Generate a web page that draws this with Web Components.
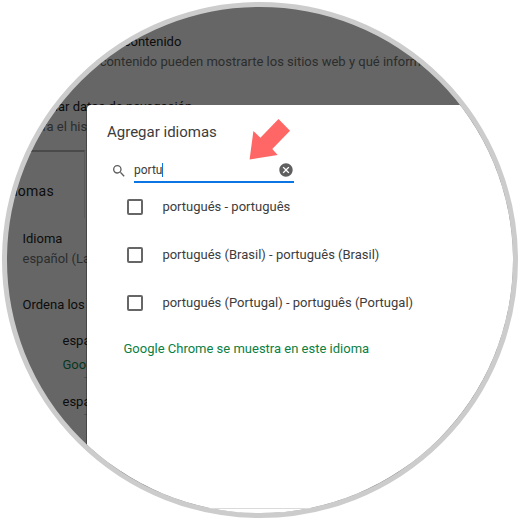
<!DOCTYPE html>
<html lang="es">
<head>
<meta charset="utf-8">
<title>Agregar idiomas</title>
<style>
  body {
    margin: 0;
    padding: 2px;
    background: #fff;
    font-family: Roboto, "Liberation Sans", sans-serif;
    font-size: 13px;
    line-height: 20px;
    color: #3c3c3c;
  }
</style>
</head>
<body>
<round-frame>
  <settings-page slot="page">
    <settings-row title-text="Configuración de contenido" detail="Controla qué contenido pueden mostrarte los sitios web y qué información" style="padding-top: 25px"></settings-row>
    <settings-row title-text="Eliminar datos de navegación" detail="Borra el historial" style="padding-top: 25px"></settings-row>
    <settings-heading>Idiomas</settings-heading>
    <settings-row title-text="Idioma" detail="español (Lat" style="padding-top: 11px"></settings-row>
    <settings-row title-text="Ordena los" style="padding-top: 26px"></settings-row>
    <settings-row title-text="espa" detail="Goo" green divider style="padding: 16px 0 0 40px"></settings-row>
    <settings-row title-text="espa" divider style="padding: 14px 0 0 40px"></settings-row>
  </settings-page>
  <language-dialog slot="dialog" heading="Agregar idiomas">
    <search-field slot="search" value="portu"></search-field>
    <language-option>portugués - português</language-option>
    <language-option>portugués (Brasil) - português (Brasil)</language-option>
    <language-option>portugués (Portugal) - português (Portugal)</language-option>
    <span slot="note">Google Chrome se muestra en este idioma</span>
  </language-dialog>
  <pointer-arrow slot="pointer"></pointer-arrow>
</round-frame>

<script>
class BaseElement extends HTMLElement {
  constructor() {
    super();
    this.attachShadow({ mode: "open" });
  }

  connectedCallback() {
    this.shadowRoot.innerHTML = this.render();
  }
}

class RoundFrame extends BaseElement {
  render() {
    return `
      <style>
        :host {
          display: block;
          position: relative;
          box-sizing: border-box;
          width: 516px;
          height: 516px;
          border: 5px solid #ccc;
          border-radius: 50%;
          overflow: hidden;
          background: #666;
        }
        /* the dialog and the arrow lie over the page */
        ::slotted([slot="dialog"]) {
          position: absolute;
          left: 80px;
          top: 98px;
        }
        ::slotted([slot="pointer"]) {
          position: absolute;
          left: 242px;
          top: 111px;
        }
      </style>
      <slot name="page"></slot>
      <slot name="dialog"></slot>
      <slot name="pointer"></slot>
    `;
  }
}

class SettingsPage extends BaseElement {
  render() {
    return `
      <style>
        :host {
          display: block;
          padding-left: 15.5px;
          white-space: nowrap;
        }
      </style>
      <slot></slot>
    `;
  }
}

class SettingsRow extends BaseElement {
  render() {
    const detail = this.getAttribute("detail");
    return `
      <style>
        :host { display: block; }
        .title { color: #0c0c0c; }
        .detail { color: #2b2d2d; }
        :host([green]) .detail {
          color: #06361f;
          padding-top: 4px;
        }
        :host([divider])::after {
          content: "";
          display: block;
          width: 4px;
          height: 1px;
          margin: 2px 0 0 21px;
          background: #525252;
        }
      </style>
      <div class="title">${this.getAttribute("title-text")}</div>
      ${detail ? `<div class="detail">${detail}</div>` : ""}
    `;
  }
}

class SettingsHeading extends BaseElement {
  render() {
    return `
      <style>
        :host {
          display: block;
          width: 77px;
          height: 66px;
          margin: 13px 0 0 -15.5px;
          border-top: 2px solid #4a4a4a;
          border-right: 1px solid #5a5a5a;
        }
        div {
          margin-left: -5px;
          padding-top: 29px;
          font-size: 14px;
          letter-spacing: .25px;
          color: #0c0c0c;
        }
      </style>
      <div><slot></slot></div>
    `;
  }
}

class LanguageDialog extends BaseElement {
  render() {
    return `
      <style>
        :host {
          display: block;
          width: 450px;
          height: 420px;
          border-radius: 4px 4px 0 0;
          background: #fff;
          box-shadow: -1px 0 0 rgba(0, 0, 0, .3);
        }
        .body {
          box-sizing: border-box;
          height: 404px;
          padding: 17px 20px 0;
          border-bottom: 1px solid #dadada;
        }
        h1 {
          margin: 0 0 17px;
          font-size: 15px;
          font-weight: 400;
          line-height: 20px;
        }
        .options { padding: 0 0 0 20px; }
        .note {
          padding: 12px 0 0 16.5px;
          color: #0b8043;
        }
      </style>
      <div class="body">
        <h1>${this.getAttribute("heading")}</h1>
        <slot name="search"></slot>
        <div class="options"><slot></slot></div>
        <div class="note"><slot name="note"></slot></div>
      </div>
    `;
  }
}

class SearchField extends BaseElement {
  render() {
    return `
      <style>
        :host {
          display: flex;
          align-items: flex-start;
          height: 24px;
          font-size: 12px;
        }
        .glass {
          width: 16px;
          height: 16px;
          margin: 4px 7px 0 4px;
        }
        .field {
          display: flex;
          align-items: center;
          box-sizing: border-box;
          width: 160px;
          height: 24px;
          border-bottom: 2px solid #0b75e4;
        }
        .caret {
          width: 1px;
          height: 14px;
          background: #0b75e4;
        }
        .clear {
          width: 16px;
          height: 16px;
          margin-left: auto;
        }
      </style>
      <svg class="glass" viewBox="0 0 24 24" fill="#5f5f5f">
        <path d="M15.5 14h-.79l-.28-.27A6.47 6.47 0 0 0 16 9.5 6.5 6.5 0 1 0 9.5 16c1.61 0 3.09-.59 4.23-1.57l.27.28v.79l5 4.99L20.49 19l-4.99-5zm-6 0a4.5 4.5 0 1 1 0-9 4.5 4.5 0 0 1 0 9z"/>
      </svg>
      <div class="field">
        <span>${this.getAttribute("value")}</span>
        <span class="caret"></span>
        <svg class="clear" viewBox="0 0 24 24" fill="#5f5f5f">
          <path d="M12 2C6.47 2 2 6.47 2 12s4.47 10 10 10 10-4.47 10-10S17.53 2 12 2zm5 13.59L15.59 17 12 13.41 8.41 17 7 15.59 10.59 12 7 8.41 8.41 7 12 10.59 15.59 7 17 8.41 13.41 12 17 15.59z"/>
        </svg>
      </div>
    `;
  }
}

class LanguageOption extends BaseElement {
  render() {
    return `
      <style>
        :host {
          display: flex;
          align-items: center;
          height: 48px;
          white-space: nowrap;
        }
        .box {
          box-sizing: border-box;
          width: 16px;
          height: 16px;
          margin-right: 19.4px;
          border: 2px solid #666;
          border-radius: 2px;
        }
      </style>
      <span class="box"></span>
      <span><slot></slot></span>
    `;
  }
}

class PointerArrow extends BaseElement {
  render() {
    return `
      <style>
        :host { display: block; width: 42px; height: 42px; }
        svg { display: block; }
      </style>
      <svg width="42" height="42" viewBox="249 118 42 42">
        <path d="M278.5 119 290 130.8 272.3 149l5.4 6-28.1 4.4 3.8-28.4 7 6.8z" fill="#f66"/>
      </svg>
    `;
  }
}

customElements.define("round-frame", RoundFrame);
customElements.define("settings-page", SettingsPage);
customElements.define("settings-row", SettingsRow);
customElements.define("settings-heading", SettingsHeading);
customElements.define("language-dialog", LanguageDialog);
customElements.define("search-field", SearchField);
customElements.define("language-option", LanguageOption);
customElements.define("pointer-arrow", PointerArrow);
</script>
</body>
</html>
